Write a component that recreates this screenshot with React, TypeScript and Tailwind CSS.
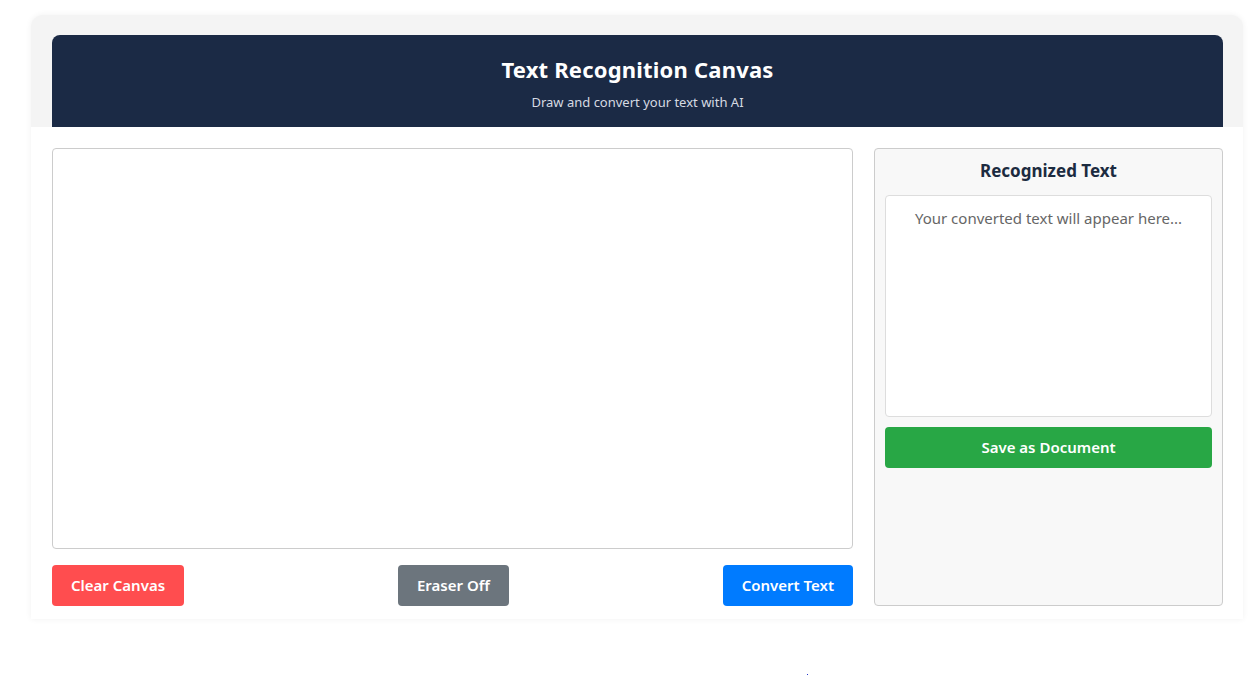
export default function App() {
  return (
    <div className="min-h-[675px] bg-white pt-[15px]" style={{ fontFamily: '"Noto Sans", "Open Sans", sans-serif' }}>
      <div className="ml-[31px] w-[1212px] rounded-t-xl bg-[#f4f4f4] shadow-[0_0_6px_rgba(0,0,0,0.06)]">
        {/* Header */}
        <div className="pl-[21px] pr-[20px] pt-5">
          <div className="flex h-[92px] flex-col items-center rounded-t-lg bg-[#1b2a45] pt-[19px]">
            <h1 className="text-[22px] font-bold leading-[30px] tracking-[0.2px] text-white">Text Recognition Canvas</h1>
            <p className="mt-[8px] text-[13px] leading-5 text-[#d6dae2]">Draw and convert your text with AI</p>
          </div>
        </div>

        {/* Body */}
        <div className="flex gap-[21px] bg-white pb-[13px] pl-[21px] pr-[20px] pt-[21px]">
          <div className="flex w-[801px] flex-col">
            <div className="h-[401px] rounded border border-[#cccccc] bg-white" />
            <div className="mt-[16px] flex items-center justify-between">
              <button className="h-[41px] rounded bg-[#ff4d4f] px-[19px] text-[15px] font-semibold text-white">Clear Canvas</button>
              <button className="h-[41px] rounded bg-[#6c757d] px-[19px] text-[15px] font-semibold text-white">Eraser Off</button>
              <button className="h-[41px] rounded bg-[#007bff] px-[19px] text-[15px] font-semibold text-white">Convert Text</button>
            </div>
          </div>

          <div className="flex h-[458px] w-[349px] flex-col rounded border border-[#cccccc] bg-[#f8f8f8] px-[10px]">
            <h2 className="mt-[10px] text-center text-[17px] font-bold leading-6 text-[#1c2b40]">Recognized Text</h2>
            <div className="mt-[12px] h-[222px] rounded border border-[#dddddd] bg-white px-3 pt-[10px] text-center text-[15px] leading-6 text-[#666666]">
              Your converted text will appear here...
            </div>
            <button className="mt-[10px] h-[41px] rounded bg-[#28a745] text-[15px] font-semibold text-white">Save as Document</button>
          </div>
        </div>
      </div>
      <div className="ml-[807px] mt-[55px] h-[2px] w-[1px] bg-[#2233cc]" />
    </div>
  );
}
